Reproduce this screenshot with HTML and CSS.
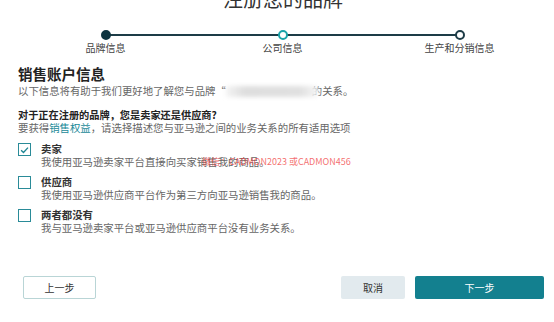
FILE: index.html
```html
<!DOCTYPE html>
<html lang="zh">
<head>
<meta charset="utf-8">
<link rel="stylesheet" href="styles.css">
</head>
<body>
<div class="page">
  <h1 class="title">注册您的品牌</h1>
  <div class="stepper">
    <div class="step step-done"><span class="dot"></span><span class="step-label">品牌信息</span></div>
    <div class="step step-current"><span class="dot"></span><span class="step-label">公司信息</span></div>
    <div class="step step-next"><span class="dot"></span><span class="step-label">生产和分销信息</span></div>
  </div>

  <section class="content">
    <h2 class="heading">销售账户信息</h2>
    <p class="sub">以下信息将有助于我们更好地了解您与品牌“<span class="blur"></span>的关系。</p>

    <p class="question">对于正在注册的品牌，您是卖家还是供应商?</p>
    <p class="hint">要获得<a class="link">销售权益</a>，请选择描述您与亚马逊之间的业务关系的所有适用选项</p>

    <div class="options">
      <div class="option">
        <span class="box checked"><svg viewBox="0 0 12 12" width="12" height="12"><path d="M2.3 6.2 L4.9 8.7 L9.8 3.4" fill="none" stroke="#1e8593" stroke-width="1.5"/></svg></span>
        <div class="opt-text">
          <div class="opt-label">卖家</div>
          <div class="opt-desc">我使用亚马逊卖家平台直接向买家销售我的商品。</div>
        </div>
        <span class="watermark">微信：CADMON2023 或CADMON456</span>
      </div>
      <div class="option">
        <span class="box"></span>
        <div class="opt-text">
          <div class="opt-label">供应商</div>
          <div class="opt-desc">我使用亚马逊供应商平台作为第三方向亚马逊销售我的商品。</div>
        </div>
      </div>
      <div class="option">
        <span class="box"></span>
        <div class="opt-text">
          <div class="opt-label">两者都没有</div>
          <div class="opt-desc">我与亚马逊卖家平台或亚马逊供应商平台没有业务关系。</div>
        </div>
      </div>
    </div>
  </section>

  <div class="actions">
    <button class="btn btn-back">上一步</button>
    <div class="actions-right">
      <button class="btn btn-cancel">取消</button>
      <button class="btn btn-next">下一步</button>
    </div>
  </div>
</div>
</body>
</html>
```

FILE: styles.css
```css
* { box-sizing: border-box; }
html, body { margin: 0; padding: 0; background: #fff; }
body {
  font-family: "Noto Sans CJK SC", "Noto Sans", sans-serif;
  color: #555;
  width: 554px;
  height: 322px;
  overflow: hidden;
}
.page { position: relative; }
.title {
  margin: -13px 0 0 0;
  padding-left: 12px;
  text-align: center;
  font-size: 20px;
  line-height: 24px;
  font-weight: 400;
  color: #333;
}
.stepper {
  display: grid;
  grid-template-columns: repeat(3, 177px);
  padding-left: 17px;
  margin-top: 19px;
}
.step {
  position: relative;
  display: flex;
  flex-direction: column;
  align-items: center;
}
.step::before, .step::after {
  content: "";
  position: absolute;
  top: 4px;
  height: 2px;
  background: #1d3c47;
  width: 50%;
}
.step::before { left: 0; }
.step::after { right: 0; }
.step-done::before { display: none; }
.step-next::after { display: none; }
.dot {
  position: relative;
  z-index: 1;
  width: 10px;
  height: 10px;
  border-radius: 50%;
  background: #fff;
  border: 2px solid #1d3c47;
}
.step-done .dot { background: #0e3440; border-color: #0e3440; }
.step-current .dot { border-color: #1aa3a9; }
.step-label {
  margin-top: 1px;
  font-size: 10px;
  line-height: 13px;
  color: #444;
}
.content { padding-left: 18px; margin-top: 10px; }
.heading {
  margin: 0;
  font-size: 14.5px;
  line-height: 19px;
  font-weight: 700;
  color: #222;
}
.sub {
  margin: 1px 0 0 0;
  font-size: 10.4px;
  line-height: 14px;
  color: #666;
  display: flex;
  align-items: center;
}
.blur {
  display: inline-block;
  width: 92px;
  height: 11px;
  margin-right: -6px;
  position: relative;
  z-index: 1;
  background: linear-gradient(90deg, #f4f4f4, #dedede 20%, #e0e0e0 80%, #f6f6f6);
  filter: blur(2px);
}
.question {
  margin: 10px 0 0 0;
  font-size: 10.2px;
  line-height: 13px;
  font-weight: 700;
  color: #222;
}
.hint {
  margin: 0;
  font-size: 10.4px;
  line-height: 14px;
  color: #666;
}
.link { color: #1a8a98; }
.options { margin-top: 7px; }
.option {
  position: relative;
  display: flex;
  align-items: flex-start;
  margin-bottom: 6px;
}
.box {
  width: 13px;
  height: 13px;
  border: 1.5px solid #2a8b98;
  margin-top: 1px;
  display: flex;
  align-items: center;
  justify-content: center;
}
.box svg { display: block; }
.opt-text { margin-left: 10px; }
.opt-label {
  font-size: 10.4px;
  line-height: 13px;
  font-weight: 700;
  color: #333;
}
.opt-desc {
  font-size: 10.4px;
  line-height: 14px;
  color: #666;
}
.watermark {
  position: absolute;
  left: 184px;
  top: 13px;
  font-size: 9px;
  line-height: 13px;
  color: rgba(240, 60, 60, 0.75);
  font-family: "Noto Sans CJK SC", "Liberation Sans", sans-serif;
}
.actions {
  position: absolute;
  top: 289px;
  left: 23px;
  right: 10px;
  display: flex;
  justify-content: space-between;
}
.actions-right { display: flex; gap: 10px; }
.btn {
  font-family: "Noto Sans CJK SC", sans-serif;
  font-size: 10px;
  height: 23px;
  border-radius: 2px;
  padding: 0;
  color: #333;
}
.btn-back {
  width: 73px;
  background: #fff;
  border: 1.5px solid #b9d5d6;
}
.btn-cancel {
  width: 64px;
  background: #e2eaee;
  border: none;
}
.btn-next {
  width: 129px;
  background: #13808f;
  color: #fff;
  border: none;
}
```
